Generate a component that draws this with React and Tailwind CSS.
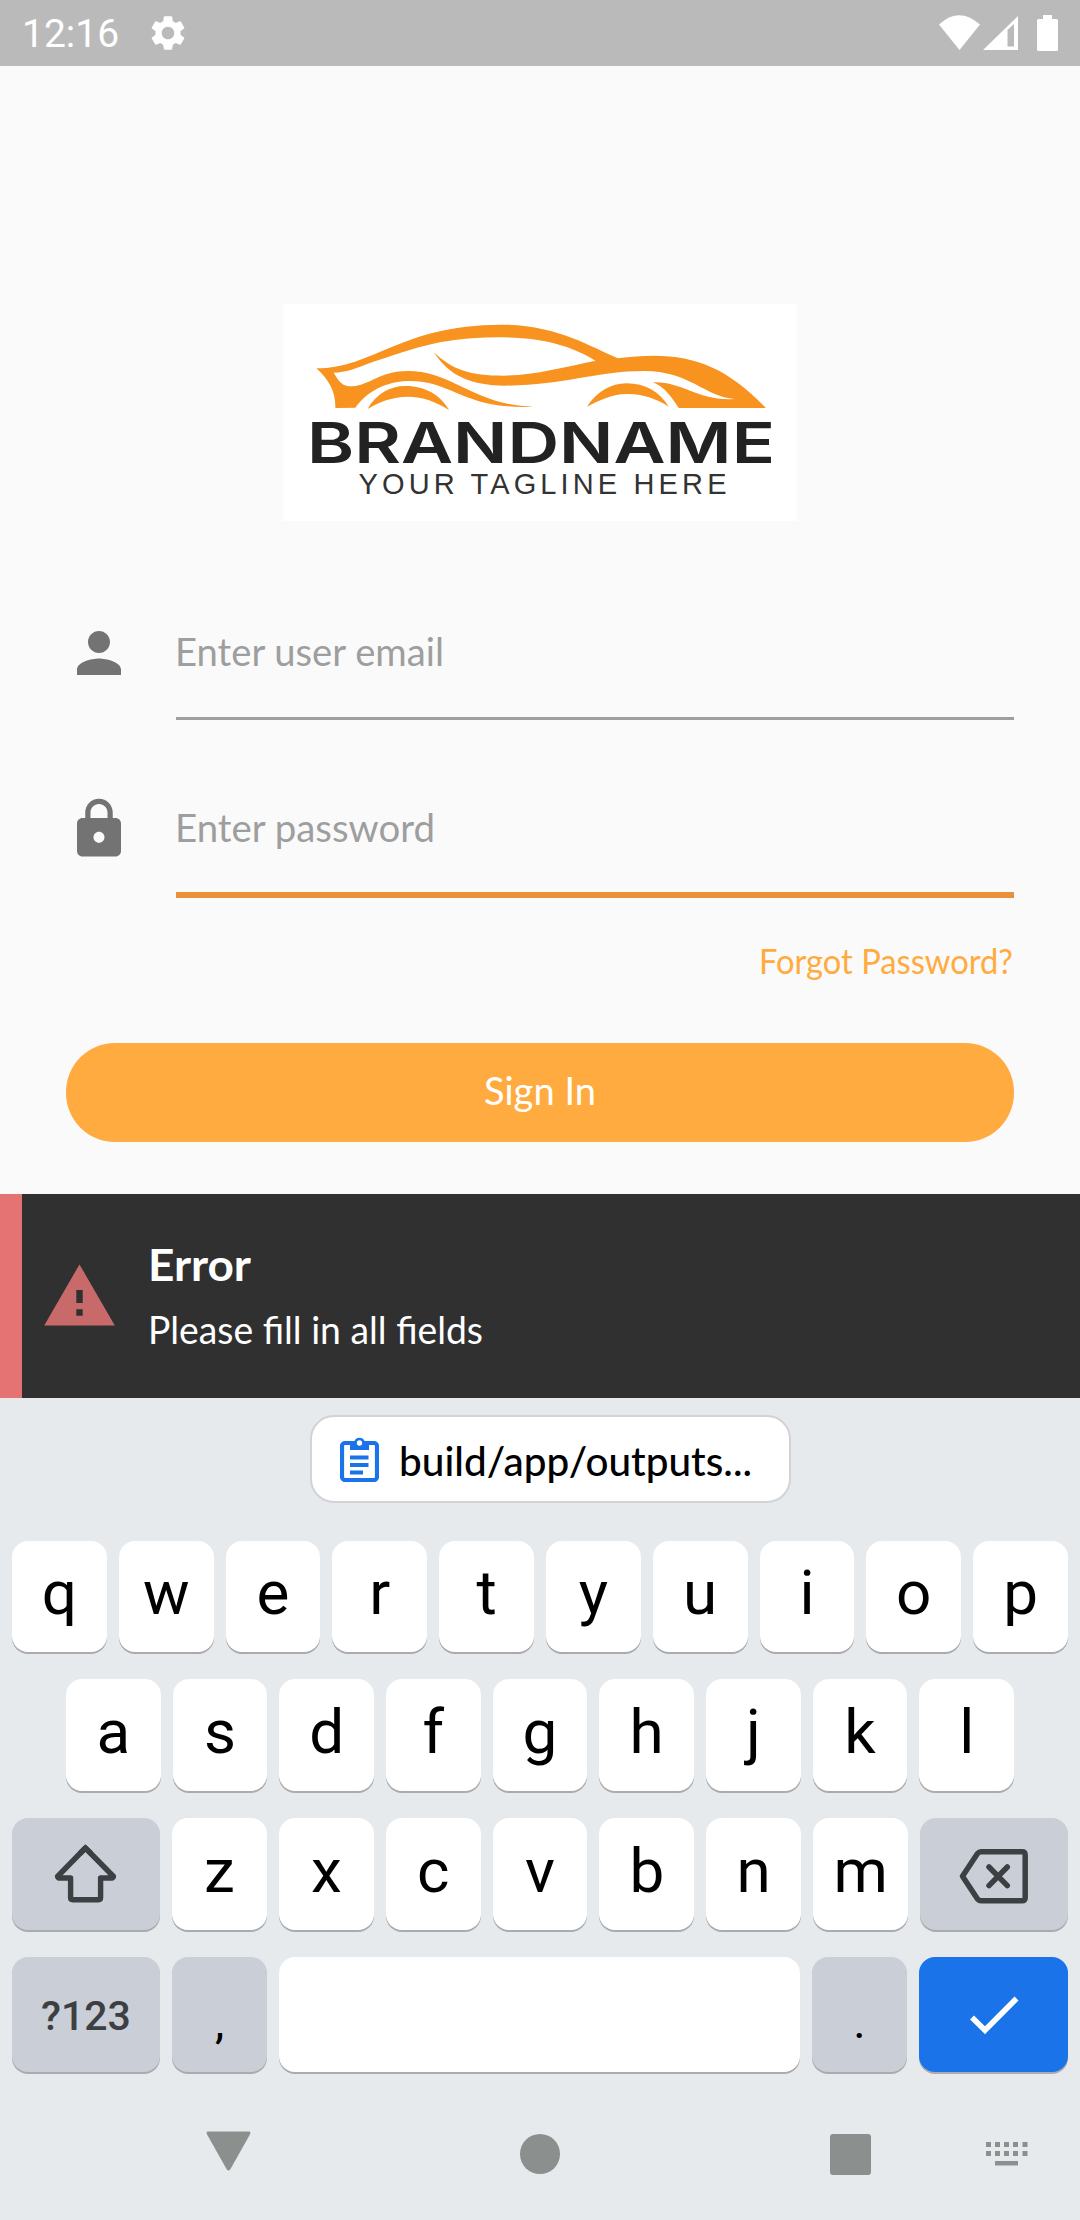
import React from "react";
import { MdPerson, MdLock, MdWarning, MdSettings } from "react-icons/md";

const sans = "font-[Lato,'Open_Sans',sans-serif]";

function StatusBar() {
  return (
    <header className="flex h-[66px] items-center justify-between bg-[#bababa] text-white">
      <div className="flex items-center pl-[22px]">
        <span className="w-[125px] pt-[3px] text-[39px] leading-none">12:16</span>
        <MdSettings className="size-[42px]" />
      </div>
      <svg className="mr-[20px] h-[66px] w-[124px]" viewBox="936 0 124 66" fill="currentColor">
        <path d="M939 24.500Q959 6 980 24.500L959.500 50Z" />
        <path fillRule="evenodd" d="M983 50L1018 16V50ZM1007.500 30V46.500H1014V24Z" />
        <path d="M1043 15h9v4h4.500q1.500 0 1.500 1.500v29q0 1.500-1.500 1.500h-18q-1.500 0-1.500-1.500v-29q0-1.500 1.500-1.500h4.500z" />
      </svg>
    </header>
  );
}

function Logo() {
  return (
    <svg className="ml-[283px] h-[217px] w-[514px] bg-white" viewBox="1 0 514 217">
      <g transform="translate(-12 -14) scale(.3444 .3333)" fill="#f7931e">
        <path d="M135 235C300 235 380 105 670 104C830 104 930 170 1010 205C1200 180 1310 215 1440 354L1187 354C1165 320 1145 290 1112 277C1200 274 1240 334 1350 327C1260 320 1220 243 1085 243C950 243 850 286 685 287C560 287 510 240 475 186C530 240 580 257 680 257C760 257 860 230 945 212C870 165 790 142 660 142C480 142 400 185 300 215C250 235 220 247 185 248C200 275 210 290 240 289C290 285 320 243 400 243C530 243 590 345 765 350C560 360 530 270 400 273C320 275 270 320 248 353L190 354C190 300 170 270 135 235Z" />
        <path d="M283 357C310 310 350 287 395 288C450 288 495 315 520 360C480 335 445 320 400 320C350 320 310 340 283 357Z" />
        <path d="M920 350C950 305 990 280 1035 280C1090 280 1130 305 1158 350C1120 325 1080 311 1035 312C990 312 950 335 920 350Z" />
      </g>
      <text
        x="25"
        y="159"
        textLength="468"
        lengthAdjust="spacingAndGlyphs"
        className="font-[Inter,sans-serif] text-[56px] font-semibold"
        fill="#222"
      >
        BRANDNAME
      </text>
      <text
        x="76.500"
        y="189.500"
        textLength="368"
        lengthAdjust="spacing"
        className="font-['Liberation_Sans',sans-serif] text-[29px]"
        fill="#333"
      >
        YOUR TAGLINE HERE
      </text>
    </svg>
  );
}

function Field({ icon: Icon, label, width, focused }) {
  return (
    <div className="flex h-[176px] px-[66px]">
      <Icon className="mt-[18px] size-[66px] shrink-0 text-[#737373]" />
      <div className="ml-[44px] flex-1">
        <div className={focused ? "h-[114px] border-b-6 border-[#e89138] box-content" : "h-[115px] border-b-3 border-[#9e9e9e] box-content"}>
          <svg className="block h-[100px] w-[400px] overflow-visible" viewBox="0 0 400 100">
            <text x="-1" y="64" textLength={width} lengthAdjust="spacingAndGlyphs" className={sans + " text-[39px]"} fill="#9e9e9e">{label}</text>
          </svg>
        </div>
      </div>
    </div>
  );
}

function Label({ children, width, className = "" }) {
  return (
    <svg className={"block overflow-visible " + className} width={width} height="50" fill="currentColor">
      <text x="0" y="40" textLength={width} lengthAdjust="spacingAndGlyphs">{children}</text>
    </svg>
  );
}

function Key({ children, className = "flex-1 bg-white" }) {
  return (
    <button className={"flex h-full min-w-0 items-center justify-center rounded-[16px] pb-[7px] text-[62px] leading-none text-black shadow-[0_2px_0_#a9abae] " + className}>
      {children}
    </button>
  );
}

const letters = (row) => row.split("").map((c) => <Key key={c}>{c}</Key>);
const wide = "w-[148px] shrink-0 bg-[#caced6] pb-0!";
const small = "w-[95px] shrink-0 bg-[#caced6] text-[47px]! pt-[21px]";

function Keyboard() {
  return (
    <section className="h-[822px] bg-[#e7eaed]">
      <div className="flex h-[143px] pt-[17px] pl-[310px]">
        <div className="flex h-[88px] w-[481px] items-center rounded-[24px] border-2 border-[#d2d3d7] bg-white pl-[28px]">
          <svg className="h-[46px] w-[39px]" viewBox="0 0 39 46">
            <rect x="2" y="7" width="35" height="37" rx="3" fill="none" stroke="#1a73e8" strokeWidth="4.200" />
            <path d="M10 5h4.500a5.500 5.500 0 0 1 10 0H29v9H10z" fill="#1a73e8" />
            <circle cx="19.500" cy="7" r="2.700" fill="#fff" />
            <path d="M10 21.500h18.500M10 29h18.500M10 36.500h13" stroke="#1a73e8" strokeWidth="3.800" />
          </svg>
          <Label width={353} className={"ml-[20px] mt-[4px] font-medium text-[40px] text-black " + sans}>build/app/outputs...</Label>
        </div>
      </div>
      <div className="flex h-[111px] gap-[12px] px-[12px]">{letters("qwertyuiop")}</div>
      <div className="mt-[27px] flex h-[112px] gap-[12px] px-[66px]">{letters("asdfghjkl")}</div>
      <div className="mt-[27px] flex h-[112px] gap-[12px] px-[12px]">
        <Key className={wide}>
          <svg className="h-[112px] w-[148px]" viewBox="0 0 148 112" fill="none" stroke="#3c4043" strokeWidth="5.400">
            <path strokeLinejoin="round" d="M73.400 30L101.500 58.500Q101 60 100 60H88.600V79.500Q88.600 81.700 86.500 81.700H60.700Q58.600 81.700 58.600 79.500V60H47Q46 60 45.500 58.500Z" />
            <path d="M68 35.500L73.400 30L79 35.500" />
          </svg>
        </Key>
        {letters("zxcvbnm")}
        <Key className={wide}>
          <svg className="h-[112px] w-[148px]" viewBox="0 0 148 112" fill="none" stroke="#3c4043" strokeWidth="5.500" strokeLinecap="round" strokeLinejoin="round">
            <path d="M42.500 58.300L57.500 35.500Q59 33.800 61 33.800H102Q105.200 33.800 105.200 37V79.500Q105.200 82.800 102 82.800H61Q59 82.800 57.500 81ZM69 49L87.300 67.600M87.300 49L69 67.600" />
          </svg>
        </Key>
      </div>
      <div className="mt-[27px] flex h-[115px] gap-[12px] px-[12px]">
        <Key className={wide + " text-[41px]! font-medium text-[#3c4043]! pt-[3px]"}>?123</Key>
        <Key className={small}>,</Key>
        <Key />
        <Key className={small}>.</Key>
        <Key className="w-[149px] shrink-0 bg-[#1a73e8] pb-0!">
          <svg className="h-[115px] w-[149px]" viewBox="0 0 149 115" fill="none" stroke="#fff" strokeWidth="5.600">
            <path d="M53 60.500L66 73.200L97.500 41.500" />
          </svg>
        </Key>
      </div>
      <nav className="mt-[58px] flex h-[48px] items-center pl-[206px] text-[#8b8f8e]">
        <svg className="-mt-[7px] h-[40px] w-[45px]" viewBox="0 0 45 40" fill="currentColor">
          <path d="M2 .5H43Q45 .5 44.200 3L24.500 38Q22.500 41 20.500 38L.8 3Q0 .5 2 .5Z" />
        </svg>
        <span className="ml-[269px] size-[40px] rounded-full bg-[#8b8f8e]" />
        <span className="ml-[270px] size-[41px] rounded-[3px] bg-[#8b8f8e]" />
        <svg className="ml-[115px] h-[24px] w-[42px]" viewBox="0 0 42 24" fill="currentColor">
          {[0, 9, 18, 27, 36.500].map((x) => (
            <React.Fragment key={x}>
              <rect x={x} y="0" width="5" height="5" />
              <rect x={x} y="9" width="5" height="5" />
            </React.Fragment>
          ))}
          <rect x="9" y="19" width="23" height="4.500" />
        </svg>
      </nav>
    </section>
  );
}

export default function App() {
  return (
    <main className="flex h-[2220px] w-[1080px] flex-col overflow-hidden bg-[#fafafa] font-[Roboto,sans-serif]">
      <StatusBar />
      <section className="h-[1128px] pt-[238px]">
        <Logo />
        <div className="mt-[81px]">
          <Field icon={MdPerson} label="Enter user email" width={269} />
          <Field icon={MdLock} label="Enter password" width={260} focused />
        </div>
        <div className={"-mt-[20px] flex justify-end pr-[67px] text-[34px] text-[#ffab40] " + sans}>
          <Label width={254}>Forgot Password?</Label>
        </div>
        <button className={"mx-[66px] mt-[59px] flex h-[99px] w-[948px] justify-center rounded-[49px] bg-[#ffab40] pt-[22px] text-[39px] text-white " + sans}>
          <Label width={112}>Sign In</Label>
        </button>
      </section>
      <section className="flex h-[204px] border-l-22 border-[#e57373] bg-[#303030]">
        <MdWarning className="mt-[64px] ml-[19px] size-[77px] text-[#c86a6a]" />
        <div className={"ml-[30px] pt-[47px] text-white " + sans}>
          <Label width={103} className="text-[43px] font-bold">Error</Label>
          <Label width={335} className="mt-[13px] text-[38.5px]">Please fill in all fields</Label>
        </div>
      </section>
      <Keyboard />
    </main>
  );
}
